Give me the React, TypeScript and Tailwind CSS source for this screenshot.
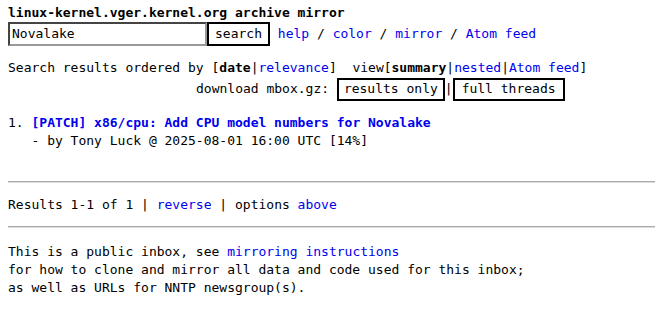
import React from "react";

const L = ({ children }: { children: React.ReactNode }) => (
  <a href="#" className="text-[#0000ee]">{children}</a>
);

export default function App() {
  return (
    <div
      className="min-h-[309px] bg-white text-black pl-2 text-[13px] leading-[18px] whitespace-pre"
      style={{ fontFamily: '"DejaVu Sans Mono", monospace' }}
    >
      <div className="pt-[4px] h-[22px] font-bold">linux-kernel.vger.kernel.org archive mirror</div>
      <div className="flex items-center h-[24px]">
        <div className="w-[199px] h-[24px] border-2 border-t-[#444] border-l-[#444] border-b-[#999] border-r-[#999] flex items-center pl-[2px]">Novalake</div>
        <div className="w-[63px] h-[24px] border-2 border-black flex items-center justify-center">search</div>
        <span> </span><L>help</L><span> / </span><L>color</L><span> / </span><L>mirror</L><span> / </span><L>Atom feed</L>
      </div>
      <div className="h-[13px]" />
      <div className="h-[18px] flex items-center">
        <span>Search results ordered by [</span><b>date</b><span>|</span><L>relevance</L><span>]  view[</span><b>summary</b><span>|</span><L>nested</L><span>|</span><L>Atom feed</L><span>]</span>
      </div>
      <div className="h-[24px] flex items-center pl-[188px]">
        <span>download mbox.gz: </span>
        <div className="h-[23px] border-2 border-black flex items-center px-[5px]">results only</div>
        <span>|</span>
        <div className="h-[23px] border-2 border-black flex items-center px-[7px]">full threads</div>
      </div>
      <div className="h-[13px]" />
      <div className="h-[18px] flex items-center">
        <span>1. </span><b><L>[PATCH] x86/cpu: Add CPU model numbers for Novalake</L></b>
      </div>
      <div className="h-[18px] flex items-center">   - by Tony Luck @ 2025-08-01 16:00 UTC [14%]</div>
      <div className="h-[31px]" />
      <div className="h-[2px] border-t border-[#aaa] border-b border-b-[#ddd]" />
      <div className="h-[13px]" />
      <div className="h-[18px] flex items-center">
        <span>Results 1-1 of 1 | </span><L>reverse</L><span> | options </span><L>above</L>
      </div>
      <div className="h-[12px]" />
      <div className="h-[2px] border-t border-[#aaa] border-b border-b-[#ddd]" />
      <div className="h-[15px]" />
      <div className="h-[18px] flex items-center">
        <span>This is a public inbox, see </span><L>mirroring instructions</L>
      </div>
      <div className="h-[18px] flex items-center">for how to clone and mirror all data and code used for this inbox;</div>
      <div className="h-[18px] flex items-center">as well as URLs for NNTP newsgroup(s).</div>
    </div>
  );
}
